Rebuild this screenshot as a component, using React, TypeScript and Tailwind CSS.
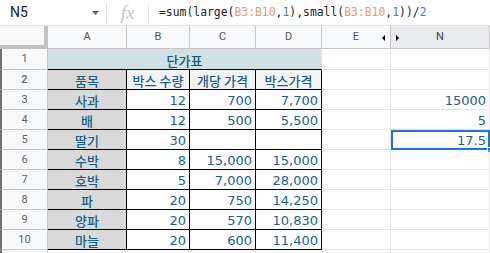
import React from 'react';

const KR = "font-['Noto_Sans_CJK_KR','Noto_Sans',sans-serif] font-medium";
const NUM = "font-['DejaVu_Sans',sans-serif]";
const UI = "font-['Roboto','Liberation_Sans',sans-serif]";

type Row = [string, string, string, string];

const rows: Row[] = [
    ['사과', '12', '700', '7,700'],
    ['배', '12', '500', '5,500'],
    ['딸기', '30', '', ''],
    ['수박', '8', '15,000', '15,000'],
    ['호박', '5', '7,000', '28,000'],
    ['파', '20', '750', '14,250'],
    ['양파', '20', '570', '10,830'],
    ['마늘', '20', '600', '11,400'],
];

const nValues: Record<number, string> = { 3: '15000', 4: '5', 5: '17.5' };

const RowHead = ({ n }: { n?: number }) => (
    <div className={`w-[48px] shrink-0 flex items-center justify-center bg-[#f8f9fa] border-l-2 border-l-[#6f6f6f] border-r border-b border-[#c7c7c7] text-[11px] text-[#5f6368] ${UI}`}>
        {n}
    </div>
);

const Formula = () => (
    <div className="text-[11.4px] text-[#222] whitespace-nowrap font-['DejaVu_Sans_Mono',monospace]">
        <span>=sum(large(</span>
        <span className="text-[#f09a55]">B3:B10</span>
        <span>,</span>
        <span className="text-[#4a78d0]">1</span>
        <span>),small(</span>
        <span className="text-[#f09a55]">B3:B10</span>
        <span>,</span>
        <span className="text-[#4a78d0]">1</span>
        <span>))/</span>
        <span className="text-[#4a78d0]">2</span>
    </div>
);

const EmptyTail = ({ n }: { n: number }) => (
    <>
        <div className="w-[69px] shrink-0 border-r border-b border-[#e2e2e2]" />
        <div className={`relative w-[99px] shrink-0 flex items-end justify-end pr-[3px] border-r border-b border-[#e2e2e2] text-[13px] leading-[16px] text-[#17628a] ${NUM}`}>
            {nValues[n]}
            {n === 5 && (
                <>
                    <div className="absolute left-0 top-0 right-[-1px] bottom-[-1px] border-2 border-[#1a73e8]" />
                    <div className="absolute right-[-4px] bottom-[-4px] w-[6px] h-[6px] bg-[#1a73e8] border border-white" />
                </>
            )}
        </div>
    </>
);

export default function App() {
    return (
        <div className="w-[490px] h-[253px] overflow-hidden bg-white">
            {/* formula bar */}
            <div className="flex items-center h-[26px] border-b border-[#e1e1e1]">
                <div className={`w-[92px] pl-[10px] text-[14px] text-[#202124] ${UI}`}>N5</div>
                <svg width="7" height="4" className="mt-[1px]">
                    <path d="M0 0 L7 0 L3.5 4Z" fill="#5f6368" />
                </svg>
                <div className="ml-[7px] w-px h-[19px] bg-[#e0e0e0]" />
                <div className="w-[41px] text-center text-[19px] italic text-[#c4c4c4] leading-none font-['Liberation_Serif',serif]">fx</div>
                <div className="w-px h-[16px] bg-[#e0e0e0]" />
                <div className="ml-[10px]">
                    <Formula />
                </div>
            </div>

            {/* column headers */}
            <div className={`flex h-[23px] text-[11px] text-[#555] ${UI}`}>
                <div className="w-[48px] shrink-0 bg-[#f8f9fa] border-r-4 border-b-4 border-[#c2c2c2]" />
                {[
                    ['A', 'w-[79px]'],
                    ['B', 'w-[63px]'],
                    ['C', 'w-[66px]'],
                    ['D', 'w-[66px]'],
                ].map(([l, w]) => (
                    <div key={l} className={`${w} shrink-0 flex items-center justify-center bg-[#f8f9fa] border-r border-b border-[#c7c7c7]`}>
                        {l}
                    </div>
                ))}
                <div className="relative w-[69px] shrink-0 flex items-center justify-center bg-[#f8f9fa] border-r border-b border-[#c7c7c7]">
                    E
                    <svg width="3" height="6" className="absolute right-[5px] top-[9px]">
                        <path d="M3 0 L0 3 L3 6Z" fill="#000" />
                    </svg>
                </div>
                <div className="relative w-[99px] shrink-0 flex items-center justify-center bg-[#e8eaed] border-r border-b border-[#c7c7c7] text-[#3c4043]">
                    N
                    <svg width="3" height="6" className="absolute left-[5px] top-[9px]">
                        <path d="M0 0 L3 3 L0 6Z" fill="#000" />
                    </svg>
                </div>
            </div>

            {/* row 1 */}
            <div className="flex h-[21px]">
                <RowHead n={1} />
                <div className={`w-[274px] shrink-0 flex items-end justify-center bg-[#d0e0e3] border-r border-r-[#e2e2e2] border-b border-b-black text-[13px] leading-[16px] text-[#0f5a7c] ${KR}`}>
                    단가표
                </div>
                <EmptyTail n={1} />
            </div>

            {/* row 2 */}
            <div className={`flex h-[20px] text-[13px] leading-[16px] text-[#17628a] ${KR}`}>
                <RowHead n={2} />
                <div className="w-[79px] shrink-0 flex items-end justify-center bg-[#d9d9d9] border-r border-b border-black">품목</div>
                <div className="w-[63px] shrink-0 flex items-end justify-center whitespace-nowrap bg-[#f3f3f3] border-r border-b border-black">박스 수량</div>
                <div className="w-[66px] shrink-0 flex items-end justify-center whitespace-nowrap bg-[#f3f3f3] border-r border-b border-black">개당 가격</div>
                <div className="w-[66px] shrink-0 flex items-end justify-center whitespace-nowrap bg-[#f3f3f3] border-r border-b border-black">박스가격</div>
                <EmptyTail n={2} />
            </div>

            {rows.map((r, i) => {
                const n = i + 3;
                return (
                    <div key={n} className="flex h-[20px] text-[13px] leading-[16px] text-[#17628a]">
                        <RowHead n={n} />
                        <div className={`w-[79px] shrink-0 flex items-end justify-center bg-[#d9d9d9] border-r border-b border-black ${KR}`}>{r[0]}</div>
                        <div className={`w-[63px] shrink-0 flex items-end justify-end pr-[3px] border-r border-b border-black ${NUM}`}>{r[1]}</div>
                        <div className={`w-[66px] shrink-0 flex items-end justify-end pr-[3px] border-r border-b border-black ${NUM}`}>{r[2]}</div>
                        <div className={`w-[66px] shrink-0 flex items-end justify-end pr-[3px] border-r border-b border-black ${NUM}`}>{r[3]}</div>
                        <EmptyTail n={n} />
                    </div>
                );
            })}

            {/* row 11, only its top edge shows */}
            <div className="flex h-[20px]">
                <RowHead />
                <div className="w-[79px] shrink-0 border-r border-[#e2e2e2]" />
                <div className="w-[63px] shrink-0 border-r border-[#e2e2e2]" />
                <div className="w-[66px] shrink-0 border-r border-[#e2e2e2]" />
                <div className="w-[66px] shrink-0 border-r border-[#e2e2e2]" />
                <div className="w-[69px] shrink-0 border-r border-[#e2e2e2]" />
                <div className="w-[99px] shrink-0 border-r border-[#e2e2e2]" />
            </div>
        </div>
    );
}
